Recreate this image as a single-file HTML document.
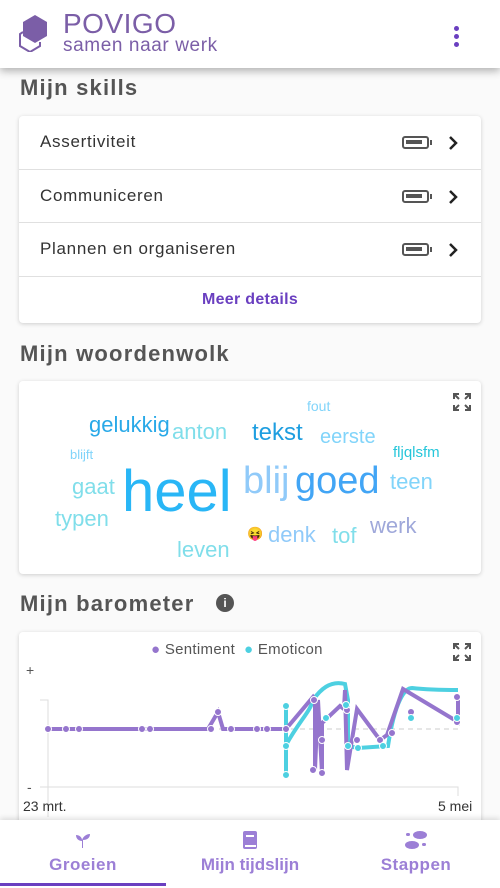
<!DOCTYPE html>
<html><head><meta charset="utf-8"><style>
*{margin:0;padding:0;box-sizing:border-box}
body{width:500px;height:888px;overflow:hidden;background:#fafafa;font-family:"Liberation Sans",sans-serif;position:relative}
.hdr{position:absolute;left:0;top:0;width:500px;height:68px;background:#fff;box-shadow:0 3px 8px rgba(0,0,0,.3);z-index:5}
.h2{position:absolute;left:20px;font-size:22px;font-weight:bold;color:#555;letter-spacing:1.2px}
.card{position:absolute;left:19px;width:462px;background:#fff;border-radius:4px;box-shadow:0 1px 4px rgba(0,0,0,.18)}
.row{height:53.5px;border-bottom:1px solid #e0e0e0;display:flex;align-items:center;padding-left:21px;font-size:17px;color:#333;position:relative;letter-spacing:.7px}
.bat{position:absolute;left:383px;top:20px;width:27px;height:13px;border:2.5px solid #555;border-radius:3px}
.bat:before{content:"";position:absolute;left:2px;top:2px;width:16px;height:4px;background:#555}
.bat:after{content:"";position:absolute;right:-5px;top:2px;width:2px;height:5px;background:#555}
.chev{position:absolute;left:428px;top:18px}
.w{position:absolute;white-space:nowrap;line-height:1}
.nav{position:absolute;left:0;top:820px;width:500px;height:68px;background:#fff;box-shadow:0 -2px 5px rgba(0,0,0,.12);z-index:4}
.tab{position:absolute;top:35px;font-size:17px;font-weight:bold;color:#9c7fd6;text-align:center;width:166px}
</style></head><body>
<div class="hdr">
<svg style="position:absolute;left:18px;top:14px" width="32" height="38" viewBox="0 0 32 38"><polygon points="17,1 29,8 29,22 17,29 5,22 5,8" fill="#7b5ea7"/><polyline points="5,18 2,20 2,32 12,38 22,32 22,28" fill="none" stroke="#7b5ea7" stroke-width="2"/></svg>
<div style="position:absolute;left:63px;top:10px;font-size:28px;color:#7b5ea7;line-height:1;letter-spacing:.5px">POVIGO</div>
<div style="position:absolute;left:63px;top:36px;font-size:19px;color:#7b5ea7;line-height:1;letter-spacing:.6px">samen naar werk</div>
<div style="position:absolute;left:454px;top:26px;width:5px">
<div style="width:5px;height:5px;border-radius:50%;background:#6a3fc0;margin-bottom:3px"></div><div style="width:5px;height:5px;border-radius:50%;background:#6a3fc0;margin-bottom:3px"></div><div style="width:5px;height:5px;border-radius:50%;background:#6a3fc0"></div></div>
</div>
<div class="h2" style="top:75px">Mijn skills</div>
<div class="card" style="top:116px;height:207px">
<div class="row">Assertiviteit<div class="bat"></div><svg class="chev" width="12" height="18" viewBox="0 0 12 18"><polyline points="3,3 9,9 3,15" fill="none" stroke="#222" stroke-width="2.5"/></svg></div>
<div class="row">Communiceren<div class="bat"></div><svg class="chev" width="12" height="18" viewBox="0 0 12 18"><polyline points="3,3 9,9 3,15" fill="none" stroke="#222" stroke-width="2.5"/></svg></div>
<div class="row">Plannen en organiseren<div class="bat"></div><svg class="chev" width="12" height="18" viewBox="0 0 12 18"><polyline points="3,3 9,9 3,15" fill="none" stroke="#222" stroke-width="2.5"/></svg></div>
<div style="text-align:center;color:#6a3fc0;font-size:16px;font-weight:bold;padding-top:14px;letter-spacing:.3px">Meer details</div>
</div>
<div class="h2" style="top:341px">Mijn woordenwolk</div>
<div class="card" style="top:381px;height:193px"></div>
<svg style="position:absolute;left:452px;top:392px" width="20" height="20" viewBox="0 0 20 20" fill="none" stroke="#555" stroke-width="2"><path d="M2 7V2h5M2 2l5 5M18 7V2h-5M18 2l-5 5M2 13v5h5M2 18l5-5M18 13v5h-5M18 18l-5-5"/></svg>
<div class="w" style="left:307px;top:399px;font-size:14px;color:#81d4fa">fout</div>
<div class="w" style="left:89px;top:414px;font-size:22px;color:#29a9e8">gelukkig</div>
<div class="w" style="left:172px;top:421px;font-size:22px;color:#80deea">anton</div>
<div class="w" style="left:252px;top:421px;font-size:24px;color:#1e9ee0">tekst</div>
<div class="w" style="left:320px;top:427px;font-size:20px;color:#81d4fa">eerste</div>
<div class="w" style="left:70px;top:448px;font-size:13px;color:#81d4fa">blijft</div>
<div class="w" style="left:393px;top:445px;font-size:15px;color:#26c6da">fljqlsfm</div>
<div class="w" style="left:72px;top:476px;font-size:22px;color:#80deea">gaat</div>
<div class="w" style="left:122px;top:463px;font-size:58px;color:#29b6f6">heel</div>
<div class="w" style="left:243px;top:462px;font-size:38px;color:#90caf9">blij</div>
<div class="w" style="left:295px;top:462px;font-size:38px;color:#42a5f5">goed</div>
<div class="w" style="left:390px;top:471px;font-size:22px;color:#81d4fa">teen</div>
<div class="w" style="left:55px;top:508px;font-size:22px;color:#80deea">typen</div>
<div class="w" style="left:247px;top:527px;font-size:13px">😝</div>
<div class="w" style="left:268px;top:524px;font-size:22px;color:#90caf9">denk</div>
<div class="w" style="left:332px;top:525px;font-size:22px;color:#80deea">tof</div>
<div class="w" style="left:370px;top:515px;font-size:22px;color:#9fa8da">werk</div>
<div class="w" style="left:177px;top:539px;font-size:22px;color:#80deea">leven</div>
<div class="h2" style="top:591px">Mijn barometer</div>
<div style="position:absolute;left:216px;top:594px;width:18px;height:18px;border-radius:50%;background:#555;color:#fff;font-size:12px;font-weight:bold;text-align:center;line-height:18px">i</div>
<div class="card" style="top:632px;height:200px"></div>
<svg style="position:absolute;left:452px;top:642px" width="20" height="20" viewBox="0 0 20 20" fill="none" stroke="#555" stroke-width="2"><path d="M2 7V2h5M2 2l5 5M18 7V2h-5M18 2l-5 5M2 13v5h5M2 18l5-5M18 13v5h-5M18 18l-5-5"/></svg>
<div style="position:absolute;left:151px;top:641px;font-size:15px;color:#555;letter-spacing:.3px"><span style="color:#9575cd">●</span> Sentiment &nbsp;<span style="color:#4dd0e1">●</span> Emoticon</div>
<svg style="position:absolute;left:0;top:660px" width="500" height="160" viewBox="0 660 500 160">
<text x="26" y="675" font-size="14" fill="#555" font-family="Liberation Sans">+</text>
<text x="27" y="792" font-size="14" fill="#555" font-family="Liberation Sans">-</text>
<path d="M40 700H48V817M40 787H458V796M48 787v9" stroke="#ddd" fill="none"/>
<line x1="48" y1="729" x2="458" y2="729" stroke="#ccc" stroke-dasharray="5 4"/>
<path d="M286 706C286 760 286 760 286 775M286 745C300 720 310 712 313 700C320 690 330 680 345 684L348 700L348 746L358 748L388 746C395 700 405 688 412 688C430 690 450 690 458 690" stroke="#4dd0e1" stroke-width="4" fill="none"/>
<path d="M48 729H208L218 712L223 729H286L313 697L315 700L315 770L318 700L322 773L322 723L340 706L344 709L345 690L347 770L357 709L380 740L387 735L403 689L458 722V696" stroke="#9575cd" stroke-width="4" fill="none"/>
<g fill="#9575cd" stroke="#fff" stroke-width="1"><circle cx="48" cy="729" r="3.5"/><circle cx="66" cy="729" r="3.5"/><circle cx="79" cy="729" r="3.5"/><circle cx="142" cy="729" r="3.5"/><circle cx="150" cy="729" r="3.5"/><circle cx="211" cy="729" r="3.5"/><circle cx="218" cy="712" r="3.5"/><circle cx="231" cy="729" r="3.5"/><circle cx="257" cy="729" r="3.5"/><circle cx="267" cy="729" r="3.5"/><circle cx="286" cy="729" r="3.5"/><circle cx="314" cy="700" r="3.5"/><circle cx="313" cy="770" r="3.5"/><circle cx="322" cy="773" r="3.5"/><circle cx="322" cy="740" r="3.5"/><circle cx="347" cy="710" r="3.5"/><circle cx="357" cy="740" r="3.5"/><circle cx="380" cy="740" r="3.5"/><circle cx="392" cy="733" r="3.5"/><circle cx="411" cy="712" r="3.5"/><circle cx="457" cy="722" r="3.5"/><circle cx="457" cy="697" r="3.5"/></g>
<g fill="#4dd0e1" stroke="#fff" stroke-width="1"><circle cx="286" cy="706" r="3.5"/><circle cx="286" cy="775" r="3.5"/><circle cx="286" cy="746" r="3.5"/><circle cx="326" cy="718" r="3.5"/><circle cx="346" cy="705" r="3.5"/><circle cx="348" cy="746" r="3.5"/><circle cx="358" cy="748" r="3.5"/><circle cx="383" cy="746" r="3.5"/><circle cx="411" cy="718" r="3.5"/><circle cx="457" cy="718" r="3.5"/></g>
<text x="23" y="811" font-size="14" fill="#333" font-family="Liberation Sans">23 mrt.</text>
<text x="438" y="811" font-size="14" fill="#333" font-family="Liberation Sans">5 mei</text>
</svg>
<div class="nav">
<svg style="position:absolute;left:75px;top:12px" width="16" height="16" viewBox="0 0 16 16" fill="#9c7fd6"><path d="M7 16V9C4 9 1 7 1 3c3 0 6 2 6 5 1-3 4-6 8-6 0 4-3 6-7 6v8z"/></svg>
<svg style="position:absolute;left:242px;top:11px" width="16" height="18" viewBox="0 0 16 18" fill="#9c7fd6"><rect x="1" y="0" width="14" height="18" rx="2"/><rect x="4" y="4" width="8" height="2" fill="#fff"/><rect x="3" y="14" width="11" height="2" fill="#fff"/></svg>
<svg style="position:absolute;left:404px;top:10px" width="24" height="20" viewBox="0 0 24 20" fill="#9c7fd6"><ellipse cx="16" cy="5" rx="7" ry="4"/><ellipse cx="8" cy="15" rx="7" ry="4"/><rect x="2" y="3" width="4" height="3" rx="1.5"/><rect x="18" y="13" width="4" height="3" rx="1.5"/></svg>
<div class="tab" style="left:0;letter-spacing:.5px">Groeien</div>
<div class="tab" style="left:167px">Mijn tijdslijn</div>
<div class="tab" style="left:333px;letter-spacing:.5px">Stappen</div>
<div style="position:absolute;left:0;top:63px;width:166px;height:3px;background:#6a3fc0"></div>
</div>
</body></html>
